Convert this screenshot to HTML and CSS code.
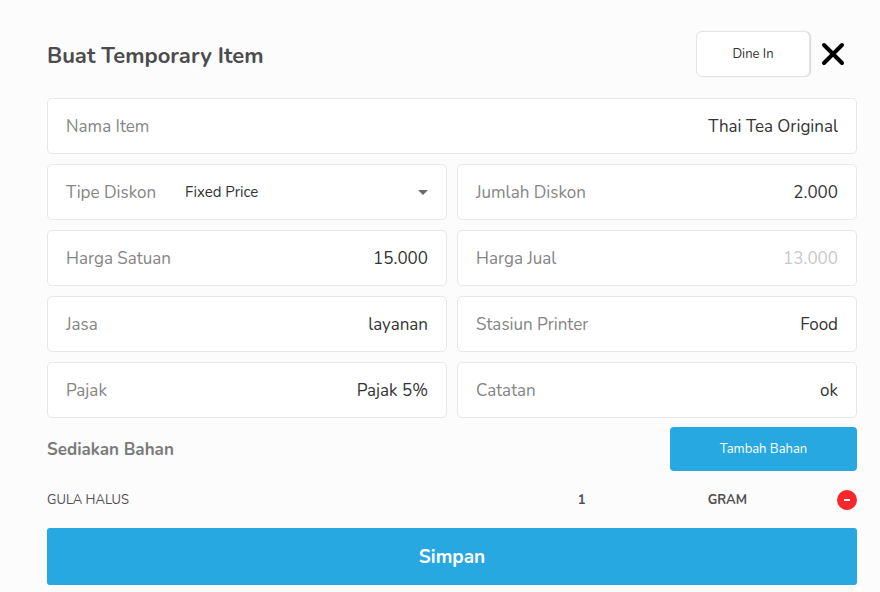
FILE: index.html
```html
<!DOCTYPE html>
<html lang="id">
<head>
  <meta charset="UTF-8" />
  <meta name="viewport" content="width=device-width, initial-scale=1" />
  <title>Buat Temporary Item</title>
  <link rel="stylesheet" href="styles.css">
</head>
<body>

  <form class="item-form">
    <header class="form-header">
      <h1>Buat Temporary Item</h1>
      <button type="button" class="order-type">Dine In</button>
      <button type="button" class="close-btn" aria-label="Tutup">
        <svg viewBox="0 0 24 24" width="24" height="24"><path d="M3 3L21 21M21 3L3 21" /></svg>
      </button>
    </header>

    <div class="fields">
      <div class="field wide">
        <label for="nama">Nama Item</label>
        <input type="text" id="nama" value="Thai Tea Original" />
      </div>
      <div class="field">
        <label for="tipe">Tipe Diskon</label>
        <select id="tipe">
          <option>Fixed Price</option>
        </select>
        <svg class="arrow" viewBox="0 0 10 5" width="10" height="5"><path d="M0 0H10L5 5Z" /></svg>
      </div>
      <div class="field">
        <label for="jumlah">Jumlah Diskon</label>
        <input type="text" id="jumlah" value="2.000" />
      </div>
      <div class="field">
        <label for="satuan">Harga Satuan</label>
        <input type="text" id="satuan" value="15.000" />
      </div>
      <div class="field">
        <label for="jual">Harga Jual</label>
        <input type="text" id="jual" value="13.000" disabled />
      </div>
      <div class="field">
        <label for="jasa">Jasa</label>
        <input type="text" id="jasa" value="layanan" />
      </div>
      <div class="field">
        <label for="printer">Stasiun Printer</label>
        <input type="text" id="printer" value="Food" />
      </div>
      <div class="field">
        <label for="pajak">Pajak</label>
        <input type="text" id="pajak" value="Pajak 5%" />
      </div>
      <div class="field">
        <label for="catatan">Catatan</label>
        <input type="text" id="catatan" value="ok" />
      </div>
    </div>

    <div class="section-head">
      <h2>Sediakan Bahan</h2>
      <button type="button" class="add-btn">Tambah Bahan</button>
    </div>

    <table class="ingredients">
      <tr>
        <td class="name">GULA HALUS</td>
        <td class="qty">1</td>
        <td class="unit">GRAM</td>
        <td class="action">
          <button type="button" class="remove-btn" aria-label="Hapus GULA HALUS">
            <svg viewBox="0 0 20 20" width="20" height="20">
              <circle cx="10" cy="10" r="10" />
              <path d="M7 10H13" />
            </svg>
          </button>
        </td>
      </tr>
    </table>

    <button type="submit" class="save-btn">Simpan</button>
  </form>

</body>
</html>
```

FILE: styles.css
```css
* {
  box-sizing: border-box;
}

body {
  margin: 0;
  background: #fcfcfc;
  color: #333;
  font-family: Nunito, "Open Sans", sans-serif;
}

button, input, select {
  font-family: inherit;
  color: inherit;
}

button {
  padding: 0;
  border: none;
  background: none;
  cursor: pointer;
}

svg {
  display: block;
}

.item-form {
  padding: 31px 23px 8px 47px;
}

/* Header */
.form-header {
  display: flex;
  align-items: center;
  gap: 11px;
  padding-right: 12px;
  margin-bottom: 21px;
}

.form-header h1 {
  flex: 1;
  margin: 0;
  padding-top: 4px;
  font-size: 22px;
  line-height: 28px;
  font-weight: 700;
  color: #4c4c4c;
}

.order-type {
  width: 114px;
  height: 46px;
  background: #fff;
  border: 1px solid #e4e4e4;
  border-radius: 6px;
  box-shadow: 1px 0 1px #d8d8d8;
  font-size: 13px;
}

.close-btn svg {
  fill: none;
  stroke: #000;
  stroke-width: 4;
  stroke-linecap: round;
}

/* Fields */
.fields {
  display: grid;
  grid-template-columns: 1fr 1fr;
  gap: 10px;
}

.field {
  display: flex;
  align-items: center;
  height: 56px;
  padding: 0 18px;
  background: #fff;
  border: 1px solid #e8e8e8;
  border-radius: 5px;
}

.field.wide {
  grid-column: 1 / -1;
}

.field label {
  font-size: 17px;
  color: #858585;
}

.field input {
  flex: 1;
  min-width: 0;
  padding: 0;
  border: none;
  background: none;
  font-size: 17px;
  text-align: right;
}

.field input:disabled {
  color: #c8c8c8;
}

.field select {
  flex: 1;
  appearance: none;
  margin-left: 29px;
  padding: 0;
  border: none;
  background: none;
  font-size: 15px;
}

.arrow {
  fill: #6b6b6b;
  pointer-events: none;
}

/* Ingredients */
.section-head {
  display: flex;
  justify-content: space-between;
  align-items: center;
  margin: 9px 0 15px;
}

.section-head h2 {
  margin: 0;
  font-size: 17px;
  font-weight: 700;
  color: #7a7a7a;
}

.add-btn {
  width: 187px;
  height: 44px;
  background: #27a8e0;
  border-radius: 4px;
  color: #fff;
  font-size: 13px;
}

.ingredients {
  width: 100%;
  table-layout: fixed;
  border-collapse: collapse;
  margin-bottom: 14px;
  font-size: 13px;
  color: #505050;
}

.ingredients td {
  height: 28px;
  padding: 0;
}

.ingredients .qty,
.ingredients .unit {
  width: 18%;
  text-align: center;
  font-weight: 700;
}

.ingredients .action {
  width: 7%;
}

.remove-btn {
  display: block;
  margin-left: auto;
}

.remove-btn circle {
  fill: #f9262b;
}

.remove-btn path {
  stroke: #fff;
  stroke-width: 2;
}

.save-btn {
  display: block;
  width: 100%;
  height: 57px;
  background: #27a8e0;
  border-radius: 3px;
  color: #fff;
  font-size: 19px;
  font-weight: 700;
}
```
